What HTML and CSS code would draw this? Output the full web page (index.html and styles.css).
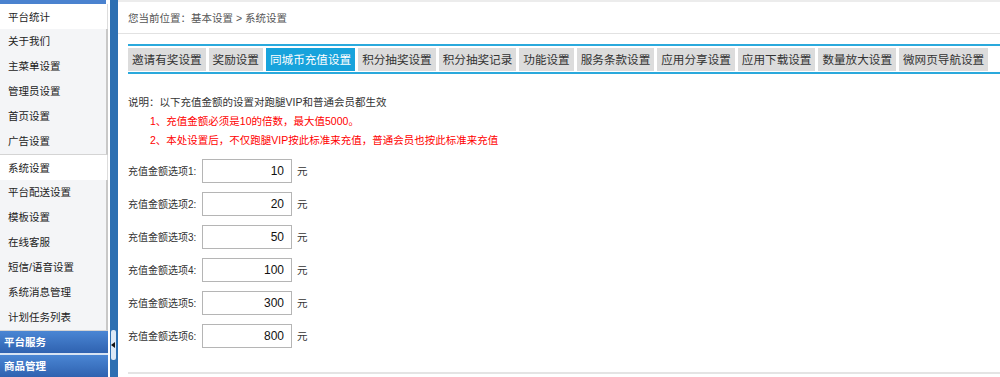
FILE: index.html
```html
<!DOCTYPE html>
<html lang="zh-CN">
<head>
    <meta charset="UTF-8">
    <title>系统设置</title>
    <link rel="stylesheet" href="styles.css">
</head>
<body>
    <div class="layout">
        <div class="sidebar">
            <div class="top-cap"></div>
            <div class="group-title">平台统计</div>
            <ul class="sub">
                <li>关于我们</li>
                <li>主菜单设置</li>
                <li>管理员设置</li>
                <li>首页设置</li>
                <li>广告设置</li>
            </ul>
            <div class="group-title">系统设置</div>
            <ul class="sub">
                <li>平台配送设置</li>
                <li>模板设置</li>
                <li>在线客服</li>
                <li>短信/语音设置</li>
                <li>系统消息管理</li>
                <li>计划任务列表</li>
            </ul>
            <div class="head">平台服务</div>
            <div class="head">商品管理</div>
        </div>
        <div class="splitter">
            <div class="bar">
                <span class="toggle"><span class="arrow"></span></span>
            </div>
        </div>
        <div class="main">
            <div class="crumb">您当前位置：基本设置 &gt; 系统设置</div>
            <div class="content">
                <div class="tabs">
                    <span class="tab">邀请有奖设置</span>
                    <span class="tab">奖励设置</span>
                    <span class="tab active">同城币充值设置</span>
                    <span class="tab">积分抽奖设置</span>
                    <span class="tab">积分抽奖记录</span>
                    <span class="tab">功能设置</span>
                    <span class="tab">服务条款设置</span>
                    <span class="tab">应用分享设置</span>
                    <span class="tab">应用下载设置</span>
                    <span class="tab">数量放大设置</span>
                    <span class="tab">微网页导航设置</span>
                </div>
                <div class="note">
                    <p>说明：以下充值金额的设置对跑腿VIP和普通会员都生效</p>
                    <p class="red">1、充值金额必须是10的倍数，最大值5000。</p>
                    <p class="red">2、本处设置后，不仅跑腿VIP按此标准来充值，普通会员也按此标准来充值</p>
                </div>
                <form class="amounts">
                    <div class="row"><label>充值金额选项1:</label><input type="text" value="10"><span>元</span></div>
                    <div class="row"><label>充值金额选项2:</label><input type="text" value="20"><span>元</span></div>
                    <div class="row"><label>充值金额选项3:</label><input type="text" value="50"><span>元</span></div>
                    <div class="row"><label>充值金额选项4:</label><input type="text" value="100"><span>元</span></div>
                    <div class="row"><label>充值金额选项5:</label><input type="text" value="300"><span>元</span></div>
                    <div class="row"><label>充值金额选项6:</label><input type="text" value="800"><span>元</span></div>
                </form>
                <div class="foot"></div>
            </div>
        </div>
    </div>
</body>
</html>
```

FILE: styles.css
```css
body {
    margin: 0;
    font-family: 'Liberation Sans', 'Noto Sans CJK SC', sans-serif;
    font-size: 10.5px;
    color: #333;
    background: #fff;
}
.layout {
    display: flex;
    height: 377px;
    overflow: hidden;
}
.sidebar {
    width: 108px;
    flex-shrink: 0;
    background: #fff;
    white-space: nowrap;
}
.top-cap {
    height: 4px;
    background: #4a82cf;
    margin-right: 2px;
}
.group-title {
    height: 25px;
    line-height: 26px;
    padding-left: 8px;
    background: #fff;
    color: #222;
    border-right: 1px solid #ddd;
}
.sub {
    list-style: none;
    margin: 0;
    padding: 0;
    background: #f4f5f7;
    border-bottom: 1px solid #d4d4d4;
    border-right: 2px solid #c8c8c8;
}
.sub li {
    height: 25px;
    line-height: 25px;
    padding-left: 8px;
    color: #222;
}
.head {
    height: 22px;
    line-height: 22px;
    padding-left: 4px;
    background: linear-gradient(#4a86d4, #2f62b0);
    color: #fff;
    font-weight: bold;
    border-bottom: 2px solid #d7e3f3;
}
.splitter {
    width: 10px;
    flex-shrink: 0;
    display: flex;
    justify-content: flex-end;
}
.bar {
    width: 8px;
    background: #2c6fb2;
    position: relative;
}
.toggle {
    position: absolute;
    left: 1px;
    top: 330px;
    width: 5px;
    height: 30px;
    background: #dbe8f6;
    border-radius: 2px;
}
.arrow {
    position: absolute;
    left: 0;
    top: 12px;
    border-top: 3px solid transparent;
    border-bottom: 3px solid transparent;
    border-right: 4px solid #111;
}
.main {
    flex: 1;
    border-top: 2px solid #ececec;
}
.crumb {
    height: 31px;
    line-height: 33px;
    padding-left: 10px;
    color: #555;
    border-bottom: 1px solid #e2e2e2;
}
.content {
    padding-left: 10px;
}
.tabs {
    margin-top: 10px;
    border-top: 2px solid #2aa9dc;
    border-bottom: 2px solid #2aa9dc;
    padding: 2px 0 1px;
    display: flex;
    gap: 3px;
    white-space: nowrap;
}
.tab {
    background: #dcdcdc;
    color: #333;
    font-size: 11.6px;
    height: 23px;
    line-height: 23px;
    padding: 0 4px;
}
.tab.active {
    background: #17a3dc;
    color: #fff;
}
.note {
    margin-top: 21px;
    line-height: 15px;
}
.note p {
    margin: 0 0 4px;
}
.note .red {
    color: #f00;
    padding-left: 22px;
}
.amounts {
    margin-top: 6px;
}
.row {
    display: flex;
    align-items: center;
    height: 33px;
    white-space: nowrap;
}
.row label {
    flex: none;
    width: 74px;
    font-size: 10px;
    color: #333;
}
.row input {
    width: 74px;
    height: 20px;
    padding: 1px 7px;
    border: 1px solid #b5b5b5;
    font-family: 'Liberation Sans', sans-serif;
    font-size: 12px;
    color: #111;
    text-align: right;
    margin-right: 5px;
}
.foot {
    margin-top: 20px;
    border-top: 2px solid #e4e4e4;
}
```
